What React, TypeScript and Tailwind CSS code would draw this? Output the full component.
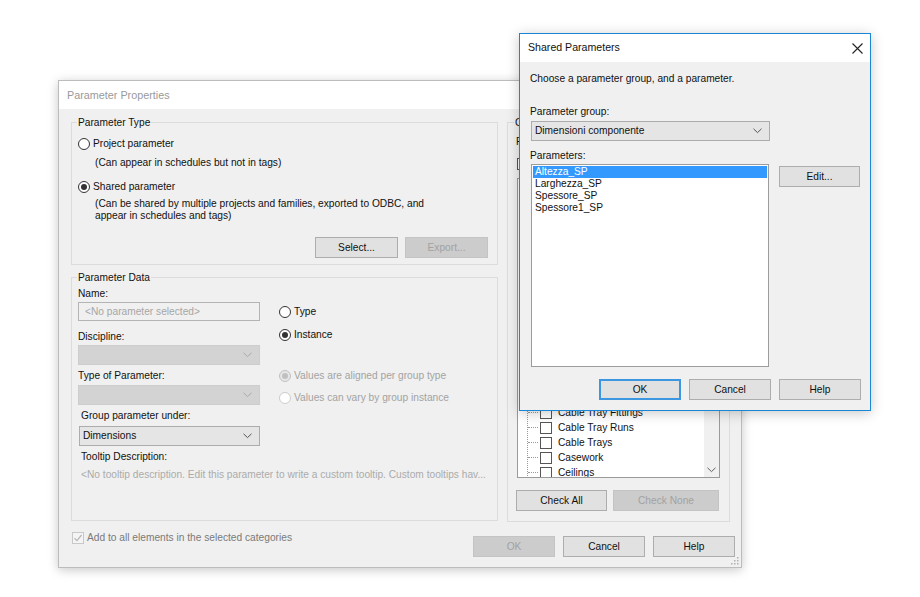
import React from "react";

function Chevron({ color = "#555" }: { color?: string }) {
  return (
    <svg width="9" height="6" viewBox="0 0 9 6" className="shrink-0">
      <path d="M0.5 0.8 L4.5 4.6 L8.5 0.8" fill="none" stroke={color} strokeWidth="1" />
    </svg>
  );
}

function Radio({
  checked,
  disabled,
  label,
}: {
  checked?: boolean;
  disabled?: boolean;
  label: string;
}) {
  return (
    <div className="flex items-center h-[16px] leading-[14px]">
      {disabled ? (
        <span
          className={
            checked
              ? "w-[12px] h-[12px] rounded-full border border-[#c2c2c2] bg-[#e6e6e6] flex items-center justify-center shrink-0"
              : "w-[12px] h-[12px] rounded-full border border-[#cccccc] bg-white flex items-center justify-center shrink-0"
          }
        >
          {checked && <span className="w-[6px] h-[6px] rounded-full bg-[#c0c0c0]" />}
        </span>
      ) : (
        <span className="w-[12px] h-[12px] rounded-full border border-[#333333] bg-white flex items-center justify-center shrink-0">
          {checked && <span className="w-[6px] h-[6px] rounded-full bg-[#333333]" />}
        </span>
      )}
      <span className={disabled ? "ml-[3px] text-[#a3a3a3]" : "ml-[3px] text-[#111]"}>{label}</span>
    </div>
  );
}

function Btn({
  children,
  disabled,
  def,
  w,
}: {
  children: React.ReactNode;
  disabled?: boolean;
  def?: boolean;
  w: string;
}) {
  const base = "h-[21px] flex items-center justify-center leading-[14px] shrink-0 " + w;
  if (disabled)
    return <div className={base + " bg-[#cccccc] border border-[#c4c4c4] text-[#a2a2a2]"}>{children}</div>;
  if (def)
    return <div className={base + " bg-[#e1e1e1] border-2 border-[#3c96e0] text-[#111]"}>{children}</div>;
  return <div className={base + " bg-[#e1e1e1] border border-[#adadad] text-[#111]"}>{children}</div>;
}

function Legend({ children, ml }: { children: React.ReactNode; ml: string }) {
  return (
    <div className={"-mt-[7px] h-[14px] leading-[14px] px-[1px] bg-[#f0f0f0] self-start text-[#111] " + ml}>
      {children}
    </div>
  );
}

const categories = ["Cable Tray Fittings", "Cable Tray Runs", "Cable Trays", "Casework", "Ceilings"];

function ParameterProperties() {
  return (
    <div className="absolute left-[58px] top-[80px] w-[684px] h-[488px] border border-[#bcbcbc] bg-[#f0f0f0] shadow-[0_2px_10px_rgba(0,0,0,0.22)] flex flex-col">
      <div className="h-[28px] bg-white flex items-center pl-[8px] text-[10.8px] text-[#9a9a9a] shrink-0">
        Parameter Properties
      </div>
      <div className="flex-1 pl-[12px] pr-[6px] pt-[13px] flex flex-col relative">
        <div className="flex">
          {/* left column */}
          <div className="w-[427px] flex flex-col">
            <div className="h-[143px] border border-[#dcdcdc] flex flex-col pl-[6px]">
              <Legend ml="ml-[-1px]">Parameter Type</Legend>
              <div className="mt-[6px]">
                <Radio label="Project parameter" />
              </div>
              <div className="mt-[4px] h-[14px] leading-[14px] ml-[17px] text-[#111]">
                (Can appear in schedules but not in tags)
              </div>
              <div className="mt-[9px]">
                <Radio checked label="Shared parameter" />
              </div>
              <div className="mt-[3px] leading-[12px] ml-[17px] text-[#111]">
                (Can be shared by multiple projects and families, exported to ODBC, and
                <br />
                appear in schedules and tags)
              </div>
              <div className="mt-[15px] flex justify-end gap-[7px] pr-[9px]">
                <Btn w="w-[83px]">Select...</Btn>
                <Btn w="w-[83px]" disabled>
                  Export...
                </Btn>
              </div>
            </div>

            <div className="mt-[12px] h-[244px] border border-[#dcdcdc] flex flex-col pl-[6px]">
              <Legend ml="ml-[-1px]">Parameter Data</Legend>
              <div className="flex">
                <div className="w-[182px] flex flex-col">
                  <div className="mt-[2px] h-[14px] leading-[14px] text-[#111]">Name:</div>
                  <div className="mt-[1px] h-[19px] border border-[#b4b4b4] bg-[#f0f0f0] flex items-center pl-[6px] text-[#a6a6a6]">
                    &lt;No parameter selected&gt;
                  </div>
                  <div className="mt-[9px] h-[14px] leading-[14px] text-[#111]">Discipline:</div>
                  <div className="mt-[1px] h-[20px] bg-[#d3d3d3] border border-[#cdcdcd] flex items-center justify-end pr-[7px]">
                    <Chevron color="#a8a8a8" />
                  </div>
                  <div className="mt-[4px] h-[14px] leading-[14px] text-[#111]">Type of Parameter:</div>
                  <div className="mt-[2px] h-[20px] bg-[#d3d3d3] border border-[#cdcdcd] flex items-center justify-end pr-[7px]">
                    <Chevron color="#a8a8a8" />
                  </div>
                  <div className="mt-[4px] h-[14px] leading-[14px] ml-[3px] text-[#111]">Group parameter under:</div>
                  <div className="mt-[3px] ml-[1px] h-[20px] bg-[#e5e5e5] border border-[#acacac] flex items-center justify-between pl-[3px] pr-[7px] text-[#111]">
                    <span>Dimensions</span>
                    <Chevron />
                  </div>
                </div>
                <div className="ml-[19px] flex flex-col">
                  <div className="mt-[19px]">
                    <Radio label="Type" />
                  </div>
                  <div className="mt-[7px]">
                    <Radio checked label="Instance" />
                  </div>
                  <div className="mt-[25px]">
                    <Radio checked disabled label="Values are aligned per group type" />
                  </div>
                  <div className="mt-[6px]">
                    <Radio disabled label="Values can vary by group instance" />
                  </div>
                </div>
              </div>
              <div className="mt-[4px] ml-[3px] h-[14px] leading-[14px] text-[#111]">Tooltip Description:</div>
              <div className="mt-[4px] ml-[3px] h-[14px] leading-[14px] text-[#ababab] whitespace-nowrap">
                &lt;No tooltip description. Edit this parameter to write a custom tooltip. Custom tooltips hav...
              </div>
            </div>
          </div>

          {/* right column */}
          <div className="ml-[9px] w-[223px] h-[400px] border border-[#dcdcdc] flex flex-col pl-[8px]">
            <Legend ml="ml-[-2px]">Categories</Legend>
            <div className="mt-[5px] h-[14px] leading-[14px] flex items-center text-[#111]">
              <span>Filter list:</span>
              <div className="ml-[6px] w-[140px] h-[20px] bg-[#e5e5e5] border border-[#acacac] flex items-center justify-end px-[4px]">
                <Chevron />
              </div>
            </div>
            <div className="mt-[8px] h-[14px] flex items-center">
              <span className="w-[12px] h-[12px] border border-[#555] bg-white ml-[1px]" />
            </div>
            <div className="mt-[7px] ml-[1px] w-[203px] h-[300px] border border-[#9a9a9a] bg-white flex overflow-hidden">
              <div className="flex-1 flex flex-col justify-end overflow-hidden">
                <div className="flex-1 ml-[9px] border-l border-dotted border-[#9a9a9a]" />
                <div className="flex flex-col -mb-[3px] ml-[9px] border-l border-dotted border-[#9a9a9a]">
                  {categories.map((c) => (
                    <div key={c} className="h-[15px] flex items-center whitespace-nowrap">
                      <span className="w-[10px] border-t border-dotted border-[#9a9a9a]" />
                      <span className="ml-[2px] w-[12px] h-[12px] border border-[#555] bg-white shrink-0" />
                      <span className="ml-[6px] text-[#111]">{c}</span>
                    </div>
                  ))}
                </div>
              </div>
              <div className="w-[15px] bg-[#f0f0f0] flex flex-col justify-end items-center pb-[4px]">
                <Chevron color="#606060" />
              </div>
            </div>
            <div className="mt-[12px] flex gap-[6px]">
              <Btn w="w-[91px]">Check All</Btn>
              <Btn w="w-[106px]" disabled>
                Check None
              </Btn>
            </div>
          </div>
        </div>

        <div className="mt-[9px] flex items-start justify-between">
          <div className="ml-[1px] h-[14px] flex items-center">
            <span className="w-[12px] h-[12px] border border-[#c8c8c8] bg-[#f4f4f4] flex items-center justify-center">
              <svg width="10" height="10" viewBox="0 0 10 10">
                <path d="M1.5 5.2 L4 7.6 L8.6 2" fill="none" stroke="#b8b8b8" strokeWidth="1.3" />
              </svg>
            </span>
            <span className="ml-[3px] text-[#7a7a7a]">Add to all elements in the selected categories</span>
          </div>
          <div className="mt-[5px] flex gap-[8px]">
            <Btn w="w-[82px]" disabled>
              OK
            </Btn>
            <Btn w="w-[82px]">Cancel</Btn>
            <Btn w="w-[82px]">Help</Btn>
          </div>
        </div>

        <svg width="8" height="8" viewBox="0 0 8 8" className="absolute right-[2px] bottom-[2px]">
          <rect x="6" y="0" width="1.5" height="1.5" fill="#b0b0b0" />
          <rect x="3" y="3" width="1.5" height="1.5" fill="#b0b0b0" />
          <rect x="6" y="3" width="1.5" height="1.5" fill="#b0b0b0" />
          <rect x="0" y="6" width="1.5" height="1.5" fill="#b0b0b0" />
          <rect x="3" y="6" width="1.5" height="1.5" fill="#b0b0b0" />
          <rect x="6" y="6" width="1.5" height="1.5" fill="#b0b0b0" />
        </svg>
      </div>
    </div>
  );
}

function SharedParameters() {
  const items = ["Altezza_SP", "Larghezza_SP", "Spessore_SP", "Spessore1_SP"];
  return (
    <div className="absolute left-[519px] top-[33px] w-[352px] h-[378px] border border-[#1c86d6] bg-[#f0f0f0] shadow-[0_2px_12px_rgba(0,0,0,0.22)] flex flex-col">
      <div className="h-[28px] bg-white flex items-center justify-between pl-[8px] pr-[7px] shrink-0">
        <span className="text-[10.6px] text-[#111]">Shared Parameters</span>
        <svg width="11" height="11" viewBox="0 0 11 11">
          <path d="M0.5 0.5 L10.5 10.5 M10.5 0.5 L0.5 10.5" stroke="#222" strokeWidth="1.1" />
        </svg>
      </div>
      <div className="flex-1 flex flex-col pl-[10px] pr-[9px]">
        <div className="mt-[10px] h-[14px] leading-[14px] text-[#111]">Choose a parameter group, and a parameter.</div>
        <div className="mt-[19px] h-[14px] leading-[14px] text-[#111]">Parameter group:</div>
        <div className="mt-[2px] ml-[1px] w-[239px] h-[20px] bg-[#e5e5e5] border border-[#acacac] flex items-center justify-between pl-[3px] pr-[7px] text-[#111]">
          <span>Dimensioni componente</span>
          <Chevron />
        </div>
        <div className="mt-[8px] h-[14px] leading-[14px] text-[#111]">Parameters:</div>
        <div className="mt-[1px] flex items-start">
          <div className="ml-[1px] w-[238px] h-[203px] border border-[#9c9c9c] bg-white pt-[1px] px-[1px] flex flex-col">
            {items.map((it, i) => (
              <div
                key={it}
                className={
                  i === 0
                    ? "h-[12px] leading-[12px] bg-[#3399ff] text-white pl-[2px]"
                    : "h-[12px] leading-[12px] text-[#111] pl-[2px]"
                }
              >
                {it}
              </div>
            ))}
          </div>
          <div className="ml-[10px] mt-[2px]">
            <Btn w="w-[81px]">Edit...</Btn>
          </div>
        </div>
        <div className="mt-[12px] flex justify-end gap-[8px]">
          <Btn w="w-[82px]" def>
            OK
          </Btn>
          <Btn w="w-[82px]">Cancel</Btn>
          <Btn w="w-[82px]">Help</Btn>
        </div>
      </div>
    </div>
  );
}

export default function App() {
  return (
    <div className="relative w-[920px] h-[597px] bg-white overflow-hidden font-['Liberation_Sans',Arial,sans-serif] text-[10.2px]">
      <ParameterProperties />
      <SharedParameters />
    </div>
  );
}
